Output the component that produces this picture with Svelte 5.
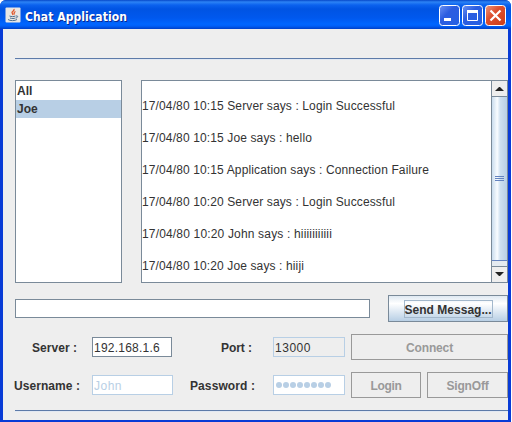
<script>
  const messages = [
    { text: '17/04/80 10:15 Server says : Login Successful', w: 253 },
    { text: '17/04/80 10:15 Joe says : hello', w: 170 },
    { text: '17/04/80 10:15 Application says : Connection Failure', w: 287 },
    { text: '17/04/80 10:20 Server says : Login Successful', w: 253 },
    { text: '17/04/80 10:20 John says : hiiiiiiiiiii', w: 190 },
    { text: '17/04/80 10:20 Joe says : hiiji', w: 162 }
  ];
  const users = ['All', 'Joe'];
  let selected = $state('Joe');

  // Spreads the letters of a line evenly so that it fills the given width.
  function fit(node, width) {
    const extra = width - node.getBoundingClientRect().width;
    node.style.letterSpacing = `${extra / node.textContent.length}px`;
  }
</script>

<div class="window">
  <header>
    <svg class="java" width="16" height="16" viewBox="0 0 16 16">
      <rect x=".5" y=".5" width="15" height="15" rx="1" fill="#e9e7e4" />
      <path d="M9 2c1 2-3.500 2.500-1.500 4.500l.5 1.500M10.500 4.500c-2 1-1.500 2-1 3" fill="none" stroke="#e0582c" stroke-width="1.300" />
      <path d="M4.500 9c2 .8 4 .8 6 0M5 11c2 .7 4 .7 5.500 0M3 12.500c2 1.500 7 1.500 9 0M11 9c2.500-.5 2 1.500 0 2" fill="none" stroke="#4f7090" />
    </svg>
    <h1><span use:fit={102}>Chat Application</span></h1>
    <div class="controls">
      <svg width="21" height="21" viewBox="0 0 21 21">
        <rect x=".5" y=".5" width="20" height="20" rx="3" fill="url(#blue)" stroke="#fff" />
        <path d="M5 14.500h7" stroke="#fff" stroke-width="3" />
        <defs>
          <linearGradient id="blue" x2="1" y2="1"><stop stop-color="#6c92f4" /><stop offset=".4" stop-color="#2c5de0" /><stop offset="1" stop-color="#2460e4" /></linearGradient>
          <linearGradient id="red" x2="1" y2="1"><stop stop-color="#ee987e" /><stop offset=".4" stop-color="#dd5030" /><stop offset="1" stop-color="#cc3c16" /></linearGradient>
        </defs>
      </svg>
      <svg width="21" height="21" viewBox="0 0 21 21">
        <rect x=".5" y=".5" width="20" height="20" rx="3" fill="url(#blue)" stroke="#fff" />
        <path d="M5.500 6v9.500h10V6" fill="none" stroke="#fff" />
        <path d="M5 6.500h11" stroke="#fff" stroke-width="3" />
      </svg>
      <svg width="21" height="21" viewBox="0 0 21 21">
        <rect x=".5" y=".5" width="20" height="20" rx="3" fill="url(#red)" stroke="#fff" />
        <path d="M5.500 5.500l10 10M15.500 5.500l-10 10" stroke="#fff" stroke-width="2.200" />
      </svg>
    </div>
  </header>

  <main>
    <div class="rule"></div>
    <section class="top">
      <ul class="users">
        {#each users as user}
          <li class:selected={user === selected}><button onclick={() => (selected = user)}>{user}</button></li>
        {/each}
      </ul>
      <div class="log">
        <div class="lines">
          {#each messages as m}
            <p><span use:fit={m.w}>{m.text}</span></p>
          {/each}
        </div>
        <div class="scrollbar">
          <div class="arrow"><svg width="9" height="5" viewBox="0 0 9 5"><path d="M0 5L4 1h1l4 4z" fill="#222" /></svg></div>
          <div class="thumb"><i></i><i></i><i></i></div>
          <div class="track"></div>
          <div class="arrow down"><svg width="9" height="5" viewBox="0 0 9 5"><path d="M0 0h9L5 4H4z" fill="#222" /></svg></div>
        </div>
      </div>
    </section>

    <section class="compose">
      <div class="field"></div>
      <div class="btn send"><span class="focus"><span use:fit={87}>Send Messag...</span></span></div>
    </section>

    <section class="row first">
      <div class="label l1"><span use:fit={45}>Server :</span></div>
      <div class="field f1"><span use:fit={66}>192.168.1.6</span></div>
      <div class="label l2"><span use:fit={31}>Port :</span></div>
      <div class="field f2 readonly"><span use:fit={36}>13000</span></div>
      <div class="btn off connect"><span use:fit={47}>Connect</span></div>
    </section>

    <section class="row second">
      <div class="label l1"><span use:fit={66}>Username :</span></div>
      <div class="field f1 disabled"><span use:fit={28}>John</span></div>
      <div class="label l2"><span use:fit={65}>Password :</span></div>
      <div class="field f2 disabled dots">{#each Array(8) as _}<b></b>{/each}</div>
      <div class="btn off login"><span use:fit={31}>Login</span></div>
      <div class="btn off signoff"><span use:fit={42}>SignOff</span></div>
    </section>
    <div class="rule bottom"></div>
  </main>
</div>

<style>
  :global(body) { background: #fff; overflow: hidden; }
  * { box-sizing: border-box; }
  .window {
    width: 511px; height: 422px; display: flex; flex-direction: column;
    background: #083bd6; padding: 0 3px 2px;
    border-radius: 6px 6px 0 0;
    font: 12px/16px "Liberation Sans", Arial, sans-serif; color: #333;
    overflow: hidden; white-space: nowrap;
  }
  header {
    height: 29px; flex: none; margin: 0 -3px; padding: 2px 5px 0 5px;
    display: flex; align-items: center;
    background: linear-gradient(#0648c8 0, #2c83f5 2px, #0b62ee 5px, #0054e3 9px, #0058ee 18px, #0066ff 24px, #0060f8 26px, #0040c8 29px);
  }
  .java { margin-top: -1px; }
  h1 {
    margin: 2px 0 0 4px; flex: 1; color: #fff; font: bold 12px/16px "DejaVu Sans Condensed", "DejaVu Sans", sans-serif;
    text-shadow: 1px 1px 0 #0a2a90;
  }
  h1 span { font-stretch: condensed; }
  .controls { display: flex; gap: 2px; }
  main { flex: 1; background: #eee; padding: 29px 0 0 12px; min-height: 0; width: 505px; }
  .rule { height: 2px; border-top: 1px solid #5d7ba9; border-bottom: 1px solid #e2e9f3; width: 493px; }
  .top { display: flex; justify-content: space-between; margin-top: 20px; height: 203px; }
  .users { margin: 0; padding: 1px 0; list-style: none; width: 107px; background: #fff; border: 1px solid #7a8a99; }
  .users li { height: 18px; }
  .users button {
    all: unset; display: block; box-sizing: border-box; width: 100%; padding-left: 1px; font-weight: bold; line-height: 18px;
  }
  .selected { background: #b8cfe5; }
  .log { width: 367px; display: flex; background: #fff; border: 1px solid #7a8a99; border-right: 0; }
  .lines { flex: 1; padding-top: 17px; }
  p { margin: 0; height: 32px; }
  .scrollbar { width: 17px; border-left: 1px solid #7a8a99; border-right: 1px solid #7a8a99; display: flex; flex-direction: column; }
  .arrow { height: 16px; flex: none; display: flex; align-items: center; justify-content: center; background: #eee; border-bottom: 1px solid #7a8a99; }
  .arrow.down { border-bottom: 0; border-top: 1px solid #7a8a99; }
  .thumb {
    flex: 1; border: 1px solid #6382bf; border-width: 0 0 1px; display: flex; flex-direction: column; gap: 1px; align-items: center; justify-content: center;
    background: linear-gradient(90deg, #c9dced, #f9fcff 35%, #cee0f0 55%, #b8cfe5);
  }
  .thumb i { width: 9px; height: 1px; background: #6382bf; }
  .track { height: 5px; background: #e4eaf0; }
  .compose { display: flex; margin-top: 12px; justify-content: space-between; height: 27px; align-items: center; }
  .field { height: 19px; width: 355px; background: #fff; border: 1px solid #7a8a99; padding-left: 1px; line-height: 20px; flex: none; }
  .btn { border: 1px solid #7a8a99; display: flex; align-items: center; justify-content: center; font-weight: bold; height: 27px; flex: none; }
  .send { width: 120px; background: linear-gradient(#dfe9f2, #fff 30%, #e0eaf4 60%, #b8cfe5); }
  .focus { border: 1px solid #a3b8cc; height: 18px; line-height: 18px; width: 89px; }
  .off { border-color: #999; color: #999; padding-top: 1px; }
  .row { display: flex; align-items: center; height: 26px; }
  .first { margin-top: 12px; }
  .second { margin-top: 12px; }
  .label { font-weight: bold; flex: none; display: flex; padding-top: 1px; }
  .row .off { height: 26px; }
  .l1 { width: 77px; }
  .first .l1 { padding-left: 17px; }
  .second .l1 { margin-left: -1px; width: 78px; }
  .f1 { width: 80px; }
  .second .f1 { width: 81px; }
  .l2 { width: 101px; padding-left: 49px; }
  .second .l2 { width: 100px; padding-left: 17px; }
  .f2 { width: 72px; margin-right: 6px; }
  .readonly { background: #eee; border-color: #b8cfe5; }
  .disabled { border-color: #b8cfe5; color: #b8cfe5; }
  .row .field { height: 20px; }
  .dots { display: flex; align-items: center; gap: 1px; padding-left: 2px; }
  .dots b { width: 6px; height: 6px; border-radius: 50%; background: #b8cfe5; }
  .connect { width: 157px; }
  .login { width: 70px; margin-right: 6px; }
  .signoff { width: 81px; }
  .bottom { margin-top: 12px; }
</style>
